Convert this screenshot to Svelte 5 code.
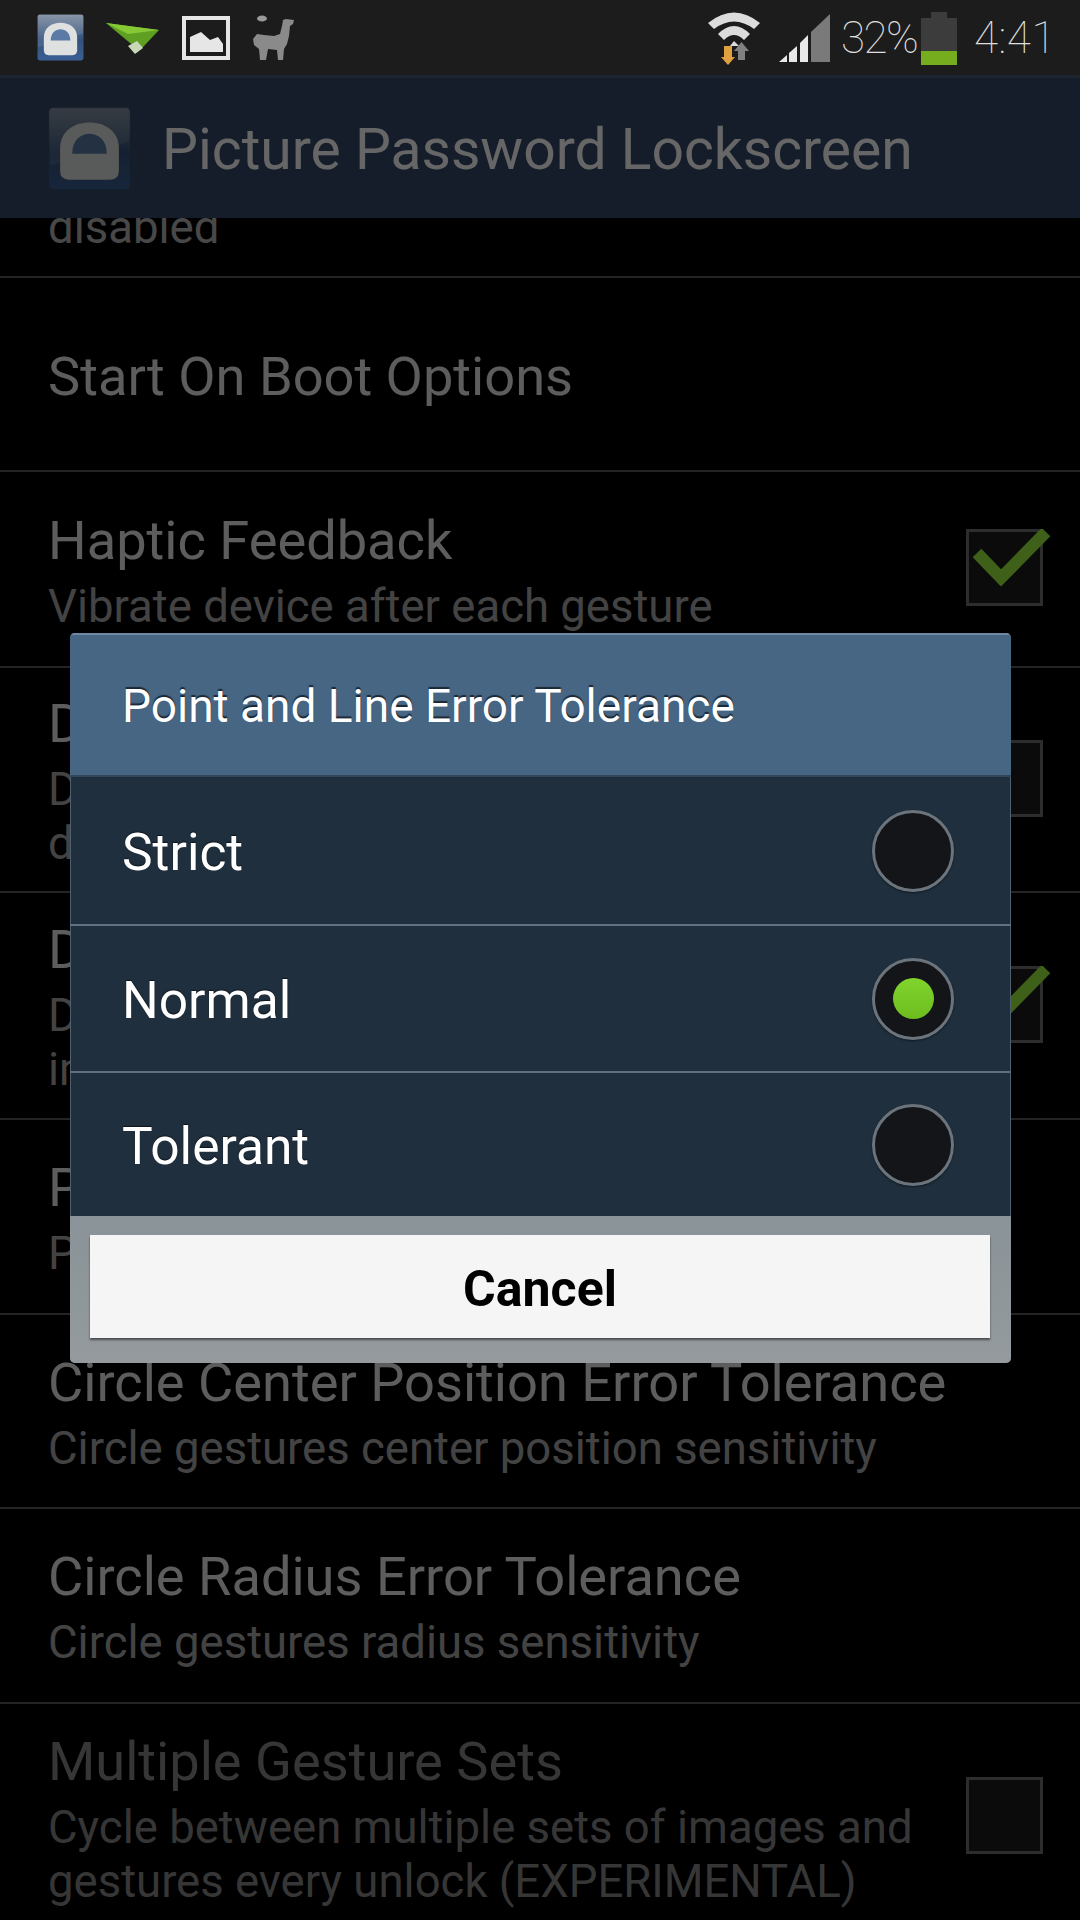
<script>
	const rows = [
		{ title: 'Start On Boot Options', h: 194 },
		{ title: 'Haptic Feedback', desc: ['Vibrate device after each gesture'], h: 196, check: 'on' },
		{ title: 'Display Gesture Points', desc: ['Display gesture points on the unlock', 'display while drawing'], h: 225, check: 'off' },
		{ title: 'Display Gesture Trails', desc: ['Display gesture trails on top of the', 'image while drawing'], h: 227, check: 'on' },
		{ title: 'Point and Line Error Tolerance', desc: ['Point and line gesture sensitivity'], h: 195 },
		{ title: 'Circle Center Position Error Tolerance', desc: ['Circle gestures center position sensitivity'], h: 194 },
		{ title: 'Circle Radius Error Tolerance', desc: ['Circle gestures radius sensitivity'], h: 195 },
		{ title: 'Multiple Gesture Sets', desc: ['Cycle between multiple sets of images and', 'gestures every unlock (EXPERIMENTAL)'], h: 228, check: 'off', dim: true }
	];

	const options = [
		{ label: 'Strict', h: 149 },
		{ label: 'Normal', h: 147, selected: true },
		{ label: 'Tolerant', h: 145 }
	];
</script>

{#snippet lock(size)}
	<svg class="lock" width={size} height={size} viewBox="0 0 48 48">
		<defs>
			<linearGradient id="tile-{size}" x1="0" y1="0" x2="0" y2="1">
				<stop offset="0" stop-color="#7b8a9e" />
				<stop offset="0.55" stop-color="#33527c" />
				<stop offset="1" stop-color="#3a5f92" />
			</linearGradient>
		</defs>
		<rect x="0.5" y="0.5" width="47" height="47" rx="2.5" fill="url(#tile-{size})" />
		<path d="M1 1 H47 V20 L24 27 L1 34 Z" fill="#fff" opacity="0.1" />
		<path d="M7 24 C7 14 15 9 24 9 C33 9 41 14 41 24 V37 Q41 42 36 42 H12 Q7 42 7 37 Z" fill="#dfe0e0" />
		<path d="M14 27 C14 19 19 15.5 24 15.5 C29 15.5 34 19 34 27 Z" fill="#5b7aa6" />
	</svg>
{/snippet}

<div class="screen">
	<header class="status">
		<div class="notifs">
			{@render lock(47)}
			<svg width="54" height="34" viewBox="0 0 54 34">
				<path d="M0 2 L53 9 L38 25 L34 29 L24 22 Z" fill="#5f9f22" />
				<path d="M0 2 L53 9 L22 13 Z" fill="#86c935" />
				<path d="M22 25 L31 20 L37 27 L29 33 Z" fill="#c8d8b8" />
			</svg>
			<svg width="48" height="44" viewBox="0 0 48 44">
				<rect x="2" y="2" width="44" height="40" fill="none" stroke="#e6e6e6" stroke-width="4" />
				<path d="M8 36 V21 L19 16 L28 24 L36 21 L41 28 V36 Z" fill="#e6e6e6" />
			</svg>
			<svg width="44" height="48" viewBox="0 0 44 48">
				<path d="M31 6 L34 5 L42 6 L41 10 L38 12 L37 22 L35 30 L32 35 L31 46 H26 L25 36 L16 35 L14 46 H8 L7 35 L2 31 L1 25 L5 20 L12 21 L22 22 L28 20 L30 12 Z" fill="#8a8a8a" />
				<ellipse cx="10" cy="4.5" rx="5" ry="3" fill="#9a9a9a" />
			</svg>
		</div>
		<div class="tray">
			<svg class="wifi" width="56" height="56" viewBox="0 0 56 56">
				<path d="M2 13 Q28 -8 54 13 L48 19 Q28 4 8 19 Z" fill="#dcdcdc" />
				<path d="M12 24 Q28 8 44 24 L38 30 Q28 20 18 30 Z" fill="#dcdcdc" />
				<path d="M24 36 L28 31 L33 36 Z" fill="#dcdcdc" />
				<path d="M18 36 H26 V47 H29 L22 55 L15 47 H18 Z" fill="#e0a040" />
				<path d="M35.5 32 L43 41 H39 V50 H32 V41 H28 Z" fill="#808080" />
			</svg>
			<svg width="54" height="50" viewBox="0 0 54 50">
				<path d="M1 49 L9 42 V49 Z" fill="#e8e8e8" />
				<path d="M11 40 L19 33 V49 H11 Z" fill="#e8e8e8" />
				<path d="M22 30 L30 22 V49 H22 Z" fill="#e8e8e8" />
				<path d="M33 19 L52 1 V49 H33 Z" fill="#7a7a7a" />
			</svg>
			<span class="pct">32%</span>
			<div class="battery">
				<span class="cap"></span>
				<span class="cell"><span class="charge"></span></span>
			</div>
			<span class="clock">4:41</span>
		</div>
	</header>

	<div class="body">
		<div class="action-bar">
			{@render lock(83)}
			<span class="app-title">Picture Password Lockscreen</span>
		</div>
		<div class="list">
			<div class="cut-row"><span>disabled</span></div>
			{#each rows as row}
				<div class="row" class:dim={row.dim} style="height: {row.h}px">
					<div class="row-text">
						<div class="row-title">{row.title}</div>
						{#each row.desc ?? [] as line, i}
							<div class="row-desc" class:lead={i === 0}>{line}</div>
						{/each}
					</div>
					{#if row.check}
						<span class="check">
							{#if row.check === 'on'}
								<svg width="90" height="60" viewBox="0 0 90 60">
									<path d="M11 24 L35 49 L80 3" fill="none" stroke="#9cf03c" stroke-width="12" />
								</svg>
							{/if}
						</span>
					{/if}
				</div>
			{/each}
		</div>
		<div class="scrim"></div>
	</div>

	<div class="dialog">
		<div class="dialog-title">Point and Line Error Tolerance</div>
		<div class="options">
			{#each options as opt, i}
				<div class="option" class:first={i === 0} style="height: {opt.h}px">
					<span class="option-label">{opt.label}</span>
					<span class="radio">
						{#if opt.selected}<span class="dot"></span>{/if}
					</span>
				</div>
			{/each}
		</div>
		<div class="buttons">
			<div class="cancel">Cancel</div>
		</div>
	</div>
</div>

<style>
	:global(body) {
		margin: 0;
		background: #000;
	}

	.screen {
		position: relative;
		width: 1080px;
		height: 1920px;
		overflow: hidden;
		display: flex;
		flex-direction: column;
		font-family: Roboto, sans-serif;
		background: #000;
	}

	/* Status bar */
	.status {
		flex: none;
		height: 75px;
		box-sizing: border-box;
		background: #1c1c1c;
		display: flex;
		justify-content: space-between;
		align-items: center;
		padding: 0 24px 0 37px;
	}

	.notifs {
		display: flex;
		align-items: center;
		gap: 22px;
	}

	.tray {
		display: flex;
		align-items: center;
		color: #dedede;
		font-weight: 100;
	}

	.wifi {
		margin-right: 16px;
	}

	.pct {
		width: 80px;
		margin-left: 9px;
		font-size: 44px;
		letter-spacing: -1.5px;
	}

	.battery {
		display: flex;
		flex-direction: column;
		align-items: center;
		width: 36px;
		margin-top: 2px;
	}

	.cap {
		width: 16px;
		height: 6px;
		background: #3c3c3c;
	}

	.cell {
		width: 36px;
		height: 47px;
		background: #3c3c3c;
		display: flex;
		align-items: flex-end;
	}

	.charge {
		width: 100%;
		height: 14px;
		background: #76ad1f;
	}

	.clock {
		font-size: 44px;
		margin-left: 17px;
		letter-spacing: 0.5px;
	}

	.body {
		position: relative;
		flex: 1;
		min-height: 0;
		overflow: hidden;
	}

	.scrim {
		position: absolute;
		inset: 0;
		background: rgba(0, 0, 0, 0.6);
	}

	.action-bar {
		height: 143px;
		box-sizing: border-box;
		background: #324a66;
		border-top: 3px solid #4a6078;
		display: flex;
		align-items: center;
		padding-left: 48px;
		gap: 31px;
	}

	.app-title {
		font-size: 57px;
		color: #fff;
		padding-top: 3px;
	}

	/* Settings list behind the dialog */
	.cut-row {
		height: 60px;
		box-sizing: border-box;
		border-bottom: 2px solid #5a5a5a;
		overflow: hidden;
		padding-left: 48px;
		position: relative;
	}

	.cut-row span {
		position: absolute;
		bottom: 22px;
		font-size: 45.5px;
		color: #b4b4b4;
	}

	.row {
		box-sizing: border-box;
		border-bottom: 2px solid #5a5a5a;
		display: flex;
		align-items: center;
		justify-content: space-between;
		padding: 5px 28px 0 48px;
	}

	.row-title {
		font-size: 54.2px;
		line-height: 62px;
		color: #e8e8e8;
	}

	.row-desc {
		font-size: 45.5px;
		line-height: 54px;
		color: #a8a8a8;
	}

	.row-desc.lead {
		margin-top: 8px;
	}

	.dim .row-title {
		color: #888;
	}

	.dim .row-desc {
		color: #888;
	}

	.check {
		position: relative;
		flex: none;
		width: 77px;
		height: 77px;
		margin-bottom: 8px;
		margin-right: 9px;
		box-sizing: border-box;
		border: 3px solid #707070;
		background: #1c1c1c;
	}

	.check svg {
		position: absolute;
		left: -3px;
		top: -3px;
	}

	/* Dialog */
	.dialog {
		position: absolute;
		left: 70px;
		top: 633px;
		width: 941px;
		height: 730px;
		border-radius: 5px;
		overflow: hidden;
		display: flex;
		flex-direction: column;
		background: #1f2f3d;
		box-shadow: inset 1px 0 0 #51606f, inset -1px 0 0 #51606f;
	}

	.dialog-title {
		flex: none;
		height: 142px;
		box-sizing: border-box;
		display: flex;
		align-items: center;
		padding: 2px 0 0 52px;
		background: #476684;
		border-top: 2px solid #7088a4;
		color: #fff;
		font-size: 46px;
		text-shadow: 0 -2px 1px #1a2735;
	}

	.option {
		box-sizing: border-box;
		display: flex;
		justify-content: space-between;
		align-items: center;
		padding: 0 57px 0 52px;
		color: #fff;
		font-size: 51.5px;
		border-top: 2px solid #5f7182;
	}

	.option.first {
		border-top: 2px solid #33475a;
	}

	.option-label {
		padding-top: 4px;
		text-shadow: 0 -1px 1px #0c141c;
	}

	.radio {
		width: 82px;
		height: 82px;
		box-sizing: border-box;
		border-radius: 50%;
		border: 3px solid #6b747c;
		background: #131519;
		display: flex;
		align-items: center;
		justify-content: center;
		box-shadow: 0 1px 2px rgba(0, 0, 0, 0.5);
	}

	.dot {
		width: 41px;
		height: 41px;
		border-radius: 50%;
		background: linear-gradient(#80d52c, #6dbd20);
	}

	.buttons {
		flex: 1;
		padding: 19px 21px 24px 20px;
		background: linear-gradient(#8a9398, #949a9d);
	}

	.cancel {
		height: 103px;
		padding-top: 5px;
		box-sizing: border-box;
		background: #f5f5f5;
		display: flex;
		align-items: center;
		justify-content: center;
		color: #000;
		font-size: 50px;
		font-weight: 700;
		box-shadow: 0 2px 2px rgba(0, 0, 0, 0.5);
	}
</style>
